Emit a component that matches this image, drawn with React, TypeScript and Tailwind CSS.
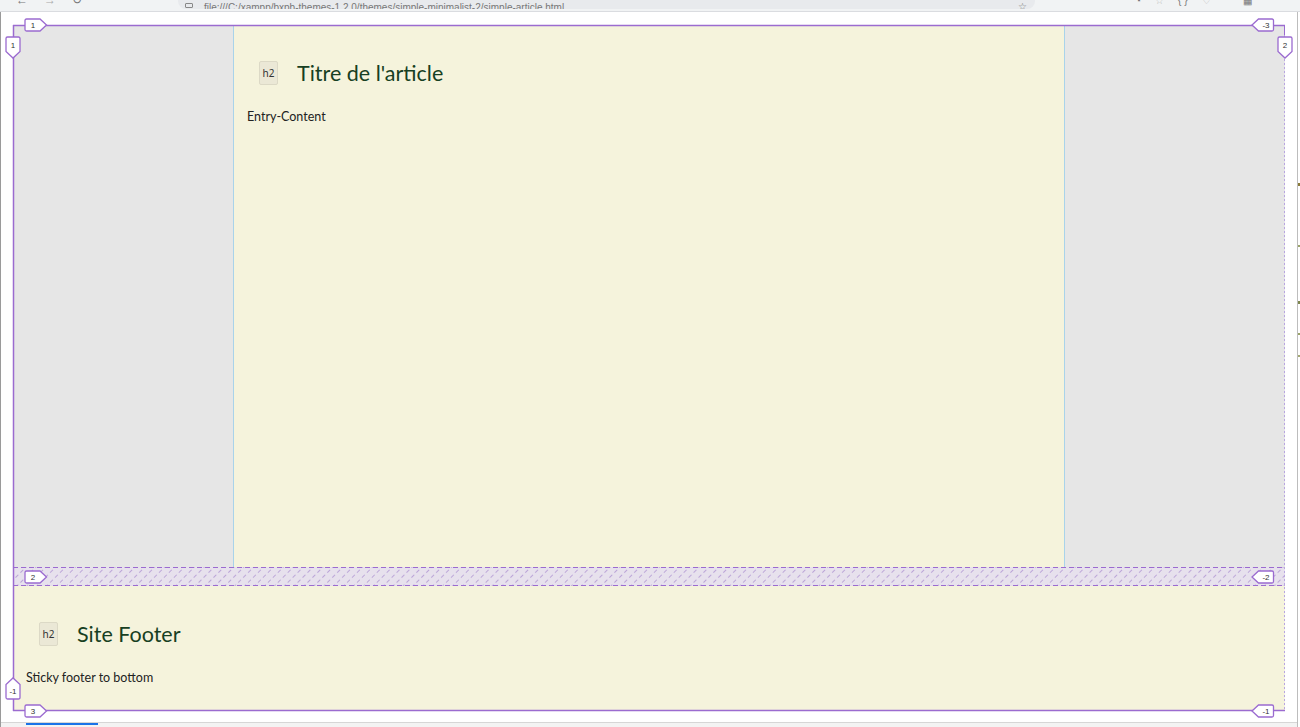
import React from "react";

const P = "#9b6bd0";

function Badge({ x, y, dir, label }: { x: number; y: number; dir: "r" | "l" | "d" | "u"; label: string }) {
  let path = "";
  let tx = 0;
  let ty = 0;
  if (dir === "r") {
    path = `M${x + 1.5} ${y} H${x + 15} L${x + 21.5} ${y + 6} L${x + 15} ${y + 12} H${x + 1.5} Q${x} ${y + 12} ${x} ${y + 10.5} V${y + 1.5} Q${x} ${y} ${x + 1.5} ${y} Z`;
    tx = x + 8;
    ty = y + 6;
  } else if (dir === "l") {
    path = `M${x + 20} ${y} H${x + 6.5} L${x} ${y + 6} L${x + 6.5} ${y + 12} H${x + 20} Q${x + 21.5} ${y + 12} ${x + 21.5} ${y + 10.5} V${y + 1.5} Q${x + 21.5} ${y} ${x + 20} ${y} Z`;
    tx = x + 14;
    ty = y + 6;
  } else if (dir === "d") {
    path = `M${x} ${y + 1.5} Q${x} ${y} ${x + 1.5} ${y} H${x + 12.5} Q${x + 14} ${y} ${x + 14} ${y + 1.5} V${y + 14.5} L${x + 7} ${y + 21} L${x} ${y + 14.5} Z`;
    tx = x + 7;
    ty = y + 8;
  } else {
    path = `M${x} ${y + 19.5} Q${x} ${y + 21} ${x + 1.5} ${y + 21} H${x + 12.5} Q${x + 14} ${y + 21} ${x + 14} ${y + 19.5} V${y + 6.5} L${x + 7} ${y} L${x} ${y + 6.5} Z`;
    tx = x + 7;
    ty = y + 13.5;
  }
  return (
    <g>
      <path d={path} fill="#ffffff" stroke={P} strokeWidth={1.3} />
      <text
        x={tx}
        y={ty}
        fontSize={8}
        fill="#333"
        textAnchor="middle"
        dominantBaseline="central"
        fontFamily="'Liberation Sans', Arial, sans-serif"
      >
        {label}
      </text>
    </g>
  );
}

function Overlay() {
  const W = 1272;
  const H = 686;
  return (
    <svg
      className="pointer-events-none absolute inset-0"
      width={W}
      height={H}
      style={{ overflow: "visible" }}
    >
      <defs>
        <pattern id="hatch" width="7" height="7" patternUnits="userSpaceOnUse" patternTransform="rotate(45)">
          <rect width="7" height="7" fill="#e7e1ed" />
          <line x1="0.5" y1="0" x2="0.5" y2="7" stroke="#bca6d8" strokeWidth="1" strokeDasharray="4 3" />
        </pattern>
      </defs>
      <rect x={0} y={542} width={W} height={19} fill="url(#hatch)" />
      <line x1={0} y1={542.5} x2={W} y2={542.5} stroke={P} strokeWidth={1} strokeDasharray="5 3" />
      <line x1={0} y1={560.5} x2={W} y2={560.5} stroke={P} strokeWidth={1} strokeDasharray="5 3" />
      <line x1={220.5} y1={0} x2={220.5} y2={542} stroke="#a9d3ea" strokeWidth={1} />
      <line x1={1051.5} y1={0} x2={1051.5} y2={542} stroke="#a9d3ea" strokeWidth={1} />
      <line x1={W - 0.5} y1={10} x2={W - 0.5} y2={H} stroke="#b9a6e0" strokeWidth={1} strokeDasharray="2 2" />
      <line x1={0} y1={0.5} x2={W} y2={0.5} stroke={P} strokeWidth={1.5} />
      <line x1={W - 0.5} y1={0} x2={W - 0.5} y2={10} stroke={P} strokeWidth={1} />
      <line x1={0.5} y1={0} x2={0.5} y2={H} stroke={P} strokeWidth={1.5} />
      <line x1={0} y1={H - 0.5} x2={W} y2={H - 0.5} stroke={P} strokeWidth={1.5} />
      <Badge x={12} y={-6} dir="r" label="1" />
      <Badge x={1239} y={-6} dir="l" label="-3" />
      <Badge x={-7} y={12} dir="d" label="1" />
      <Badge x={1265} y={12} dir="d" label="2" />
      <Badge x={12} y={546} dir="r" label="2" />
      <Badge x={1239} y={546} dir="l" label="-2" />
      <Badge x={12} y={680} dir="r" label="3" />
      <Badge x={1239} y={680} dir="l" label="-1" />
      <Badge x={-7} y={653} dir="u" label="-1" />
    </svg>
  );
}

function H2Tag() {
  return (
    <span
      className="flex h-[24px] w-[19px] items-center justify-center rounded-[2px] border border-[#dcd9c6] bg-[#ebe8d6] pt-[1px] text-[10px] text-[#333]"
      style={{ fontFamily: "'Noto Sans', sans-serif" }}
    >
      h2
    </span>
  );
}

export default function App() {
  const font = { fontFamily: "Lato, 'Noto Sans', sans-serif" };
  return (
    <div className="flex h-[727px] w-[1300px] flex-col overflow-hidden bg-white" style={font}>
      {/* browser top bar (cut) */}
      <div
        className="flex h-[12px] shrink-0 items-start overflow-hidden border-b border-[#dadce0] bg-[#f1f3f4] text-[#777]"
        style={{ fontFamily: "'Liberation Sans', Arial, sans-serif" }}
      >
        <div className="mt-[-6px] flex w-[178px] gap-[16px] pl-[16px] text-[12px] leading-[12px]">
          <span>←</span>
          <span className="text-[#aaa]">→</span>
          <span>↻</span>
        </div>
        <div className="flex h-[9px] w-[857px] items-end overflow-hidden rounded-b-[8px] bg-[#e8eaed]">
          <span className="mb-[1px] ml-[7px] h-[5px] w-[8px] rounded-[1px] border border-[#888]"></span>
          <span className="mb-[-5px] ml-[11px] whitespace-nowrap text-[10px] leading-[12px] text-[#777]">
            file:///C:/xampp/bxpb-themes-1.2.0/themes/simple-minimalist-2/simple-article.html
          </span>
          <span className="mb-[-4px] ml-auto mr-[8px] text-[10px] leading-[12px]">☆</span>
        </div>
        <div className="mt-[-5px] ml-[100px] flex gap-[14px] text-[10px] leading-[12px]">
          <span>◔</span>
          <span className="text-[#bbb]">☆</span>
          <span>{"{ }"}</span>
          <span className="text-[#aaa]">♡</span>
          <span className="ml-[18px]">▦</span>
        </div>
      </div>

      {/* viewport */}
      <div className="flex flex-1 border-l border-[#9a9a9a]">
        <div className="flex flex-1 flex-col">
          <div className="relative ml-[12px] mt-[13px] h-[686px] w-[1272px]">
            <div className="grid h-full w-full grid-cols-[220px_831px_221px] grid-rows-[542px_125px] gap-y-[19px]">
              <div className="bg-[#e6e6e6]"></div>
              <div className="bg-[#f5f3dc] px-[14px] pt-[36px]">
                <div className="flex items-center gap-[19px] pl-[12px]">
                  <H2Tag />
                  <h2 className="text-[21.5px] leading-[24px] text-[#173f22]">Titre de l'article</h2>
                </div>
                <p className="mt-[23px] text-[12.5px] leading-[18px] text-[#222]">Entry-Content</p>
              </div>
              <div className="bg-[#e6e6e6]"></div>
              <div className="col-span-3 bg-[#f5f3dc] px-[13px] pt-[36px]">
                <div className="flex items-center gap-[19px] pl-[13px]">
                  <H2Tag />
                  <h2 className="text-[21.5px] leading-[24px] text-[#173f22]">Site Footer</h2>
                </div>
                <p className="mt-[23px] text-[12.5px] leading-[18px] text-[#222]">Sticky footer to bottom</p>
              </div>
            </div>
            <Overlay />
          </div>
          <div className="mt-auto h-[5px] border-t border-[#d6d6d6] bg-[#f3f3f3]">
            <div className="ml-[25px] h-[2px] w-[72px] bg-[#1a73e8]"></div>
          </div>
        </div>
        {/* right scrollbar edge with marks */}
        <div className="flex w-[3px] flex-col border-l border-[#bdbdbd] pt-[171px]">
          <div className="h-[3px] w-[3px] bg-[#8a7b3a]"></div>
          <div className="mt-[59px] h-[2px] w-[3px] bg-[#9aa36a]"></div>
          <div className="mt-[54px] h-[3px] w-[3px] bg-[#7f8750]"></div>
          <div className="mt-[29px] h-[2px] w-[3px] bg-[#9aa36a]"></div>
          <div className="mt-[20px] h-[2px] w-[3px] bg-[#a3a873]"></div>
        </div>
      </div>
    </div>
  );
}
